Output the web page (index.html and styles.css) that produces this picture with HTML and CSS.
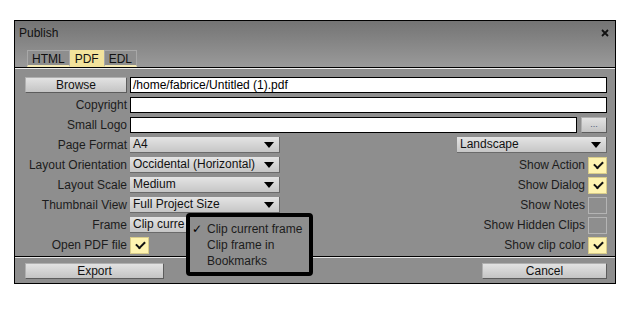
FILE: index.html
```html
<!DOCTYPE html>
<html>
<head>
<meta charset="utf-8">
<link rel="stylesheet" href="styles.css">
</head>
<body>
<div class="window">
  <div class="titlebar">
    <div class="title-row">
      <span class="title">Publish</span>
      <svg class="close" width="8" height="8" viewBox="0 0 8 8"><path d="M1 1L7 7M7 1L1 7" stroke="#111" stroke-width="1.8"/></svg>
    </div>
    <div class="tabs">
      <span class="tab">HTML</span><span class="tab active">PDF</span><span class="tab">EDL</span>
    </div>
  </div>
  <div class="content">
    <div class="row">
      <span class="btn browse">Browse</span>
      <span class="field grow">/home/fabrice/Untitled (1).pdf</span>
    </div>
    <div class="row">
      <span class="label">Copyright</span>
      <span class="field grow"></span>
    </div>
    <div class="row">
      <span class="label">Small Logo</span>
      <span class="field grow"></span>
      <span class="btn dots">...</span>
    </div>
    <div class="row">
      <span class="label">Page Format</span>
      <span class="select">A4</span>
      <span class="select right-select">Landscape</span>
    </div>
    <div class="row">
      <span class="label">Layout Orientation</span>
      <span class="select">Occidental (Horizontal)</span>
      <span class="opt">Show Action</span><span class="check on"></span>
    </div>
    <div class="row">
      <span class="label">Layout Scale</span>
      <span class="select">Medium</span>
      <span class="opt">Show Dialog</span><span class="check on"></span>
    </div>
    <div class="row">
      <span class="label">Thumbnail View</span>
      <span class="select">Full Project Size</span>
      <span class="opt">Show Notes</span><span class="check"></span>
    </div>
    <div class="row">
      <span class="label">Frame</span>
      <span class="select">Clip curre</span>
      <span class="opt">Show Hidden Clips</span><span class="check"></span>
    </div>
    <div class="row">
      <span class="label">Open PDF file</span>
      <span class="check on"></span>
      <span class="opt">Show clip color</span><span class="check on"></span>
    </div>
  </div>
  <div class="footer">
    <span class="btn export">Export</span>
    <span class="btn cancel">Cancel</span>
  </div>
  <div class="popup">
    <div class="item"><span class="tick">✓</span>Clip current frame</div>
    <div class="item">Clip frame in</div>
    <div class="item">Bookmarks</div>
  </div>
</div>
</body>
</html>
```

FILE: styles.css
```css
* { box-sizing: border-box; }
body {
  margin: 0;
  background: #ffffff;
  font-family: "Liberation Sans", Arial, sans-serif;
  font-size: 12px;
  color: #1c1c1c;
}
.window {
  position: relative;
  margin: 20px 0 0 14px;
  width: 602px;
  height: 264px;
  border: 1px solid #000;
  background: #8e8e8e;
  display: flex;
  flex-direction: column;
}
.titlebar {
  height: 47px;
  background: linear-gradient(#747474, #9a9a9a);
  border-bottom: 1px solid #000;
  display: flex;
  flex-direction: column;
}
.title-row {
  height: 22px;
  display: flex;
  align-items: center;
  justify-content: space-between;
  padding: 1px 6px 0 4px;
}
.title { font-size: 12px; color: #111; }
.close { display: block; }
.tabs {
  margin-top: 7px;
  padding-left: 12px;
  display: flex;
  height: 17px;
}
.tab {
  height: 17px;
  line-height: 16px;
  padding: 0 4px;
  background: #8e8e8e;
  border: 1px solid #a8a8a8;
  border-bottom: 2px solid #f4e9b4;
  color: #111;
  font-size: 12px;
}
.tab.active {
  background: #f3e39c;
  border-color: #f3e39c;
}
.content {
  border-top: 1px solid #ececec;
  padding: 7px 8px 0 10px;
  display: flex;
  flex-direction: column;
  gap: 2px;
  height: 188px;
}
.row {
  height: 18px;
  flex: none;
  display: flex;
  align-items: center;
  gap: 3px;
}
.label {
  width: 102px;
  text-align: right;
  white-space: nowrap;
}
.grow { flex: 1; }
.field {
  height: 16px;
  background: #fff;
  border: 1px solid #000;
  line-height: 14px;
  padding-left: 2px;
  color: #000;
}
.btn {
  height: 16px;
  line-height: 14px;
  text-align: center;
  background: linear-gradient(#e2e2e2, #c4c4c4);
  border: 1px solid #b0b0b0;
  border-right-color: #5c5c5c;
  border-bottom-color: #5c5c5c;
  color: #111;
}
.browse { width: 102px; }
.dots {
  width: 26px;
  margin-left: 1px;
  font-size: 9px;
  color: #4a5a7a;
  line-height: 12px;
}
.select {
  position: relative;
  width: 150px;
  height: 16px;
  line-height: 15px;
  padding-left: 3px;
  background: linear-gradient(#e4e4e4, #c6c6c6);
  border-right: 1px solid #6a6a6a;
  border-bottom: 1px solid #6a6a6a;
  color: #111;
  white-space: nowrap;
  overflow: hidden;
}
.select::after {
  content: "";
  position: absolute;
  right: 5px;
  top: 5px;
  border-left: 5px solid transparent;
  border-right: 5px solid transparent;
  border-top: 6px solid #000;
}
.right-select { margin-left: auto; }
.opt { margin-left: auto; white-space: nowrap; }
.check {
  width: 19px;
  height: 17px;
  border: 1px solid #b4b4b4;
  background: #8e8e8e;
  position: relative;
  flex: none;
}
.check.on {
  background: #fff4b0;
  border-color: #d8cc8a;
}
.check.on::after {
  content: "";
  position: absolute;
  left: 5px;
  top: 3px;
  width: 7px;
  height: 4px;
  border-left: 2px solid #111;
  border-bottom: 2px solid #111;
  transform: rotate(-45deg);
}
.footer {
  border-top: 1px solid #000;
  box-shadow: inset 0 1px 0 #e6e6e6;
  flex: 1;
  display: flex;
  align-items: center;
  justify-content: space-between;
  padding: 1px 8px 0 10px;
}
.export { width: 139px; }
.cancel { width: 125px; }
.popup {
  position: absolute;
  left: 171px;
  top: 192px;
  width: 127px;
  height: 63px;
  border: 4px solid #000;
  border-radius: 4px;
  background: #8e8e8e;
  padding: 4px 0 0 17px;
}
.item {
  position: relative;
  height: 16px;
  line-height: 16px;
  white-space: nowrap;
  color: #1c1c1c;
}
.tick {
  position: absolute;
  left: -15px;
  font-family: "DejaVu Sans", sans-serif;
  font-size: 12px;
  font-weight: bold;
  color: #000;
}
```
